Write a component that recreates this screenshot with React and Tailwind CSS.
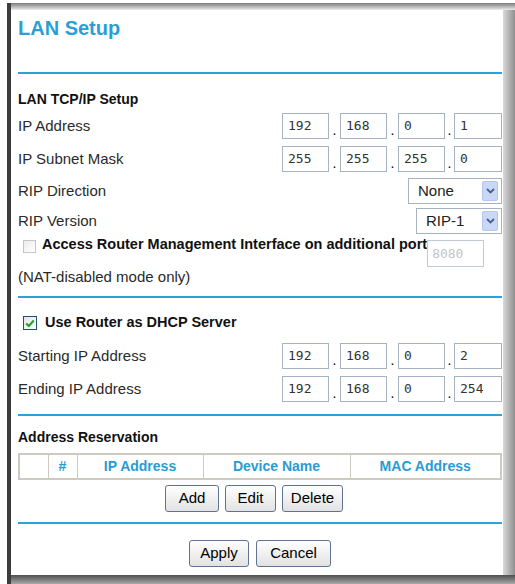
import React from 'react';

const Octet = ({ value }) => (
  <div className="w-[47px] h-[26px] border border-[#a7b2c0] bg-white pl-[5px] flex items-center font-['DejaVu_Sans_Mono',monospace] text-[13px] text-[#333]">
    {value}
  </div>
);

const Dot = () => (
  <div className="w-[11px] h-[26px] flex items-end justify-center pb-[2px] text-[14px] leading-none text-black">.</div>
);

const IpField = ({ parts }) => (
  <div className="flex">
    <Octet value={parts[0]} />
    <Dot />
    <Octet value={parts[1]} />
    <Dot />
    <Octet value={parts[2]} />
    <div className="w-[9px] h-[26px] flex items-end justify-center pb-[2px] text-[14px] leading-none text-black">.</div>
    <div className="w-[48px] h-[26px] border border-[#a7b2c0] bg-white pl-[5px] flex items-center font-['DejaVu_Sans_Mono',monospace] text-[13px] text-[#333]">
      {parts[3]}
    </div>
  </div>
);

const Select = ({ label, width }) => (
  <div className={`${width} h-[26px] border border-[#a7b2c0] bg-white flex items-center justify-between pl-[9px] pr-[3px]`}>
    <span className="text-[15px] text-[#222]">{label}</span>
    <div className="w-[16px] h-[20px] bg-[#c9d8f6] border border-[#b4c6ec] rounded-[2px] flex items-center justify-center">
      <svg width="9" height="6" viewBox="0 0 9 6">
        <path d="M1 1 L4.5 4.5 L8 1" fill="none" stroke="#4b5f8c" strokeWidth="1.8" />
      </svg>
    </div>
  </div>
);

const Rule = ({ className }) => <div className={`h-[2px] bg-[#2ba3d8] ${className}`} />;

const Button = ({ children, width }) => (
  <button className={`${width} h-[27px] border border-[#5f7390] rounded-[3px] bg-gradient-to-b from-white to-[#e2e2e2] text-[15px] text-black flex items-center justify-center`}>
    {children}
  </button>
);

const Row = ({ label, children, className }) => (
  <div className={`flex items-center justify-between h-[26px] ${className}`}>
    <span className="text-[15px] text-[#2a2a2a]">{label}</span>
    {children}
  </div>
);

export default function App() {
  return (
    <div className="w-[515px] h-[584px] bg-white pt-[3px] pl-[7px] flex font-['Liberation_Sans',Arial,sans-serif]">
      <div className="flex-1 flex">
        {/* left frame */}
        <div className="w-[4px] bg-[#3d3d3d]" />
        <div className="flex-1 flex flex-col">
          <div className="h-[7px] bg-gradient-to-b from-[#7d7d7d] to-[#ececec]" />
          <div className="flex-1 flex">
            {/* Panel */}
            <div className="flex-1 bg-white pl-[7px] pr-[1px] flex flex-col">
              <h1 className="mt-[6px] h-[24px] leading-[24px] text-[20px] font-bold text-[#2b9fd5]">LAN Setup</h1>
              <Rule className="mt-[32px]" />

              <div className="mt-[17px] h-[16px] leading-[16px] text-[14px] font-bold text-[#111]">LAN TCP/IP Setup</div>
              <Row label="IP Address" className="mt-[6px]">
                <IpField parts={['192', '168', '0', '1']} />
              </Row>
              <Row label="IP Subnet Mask" className="mt-[7px]">
                <IpField parts={['255', '255', '255', '0']} />
              </Row>
              <Row label="RIP Direction" className="mt-[6px]">
                <Select label="None" width="w-[94px]" />
              </Row>
              <Row label="RIP Version" className="mt-[4px]">
                <Select label="RIP-1" width="w-[86px]" />
              </Row>
              <div className="mt-[2px] flex items-start">
                <div className="mt-[4px] ml-[5px] w-[13px] h-[13px] border border-[#c6c6c6] bg-gradient-to-br from-[#ececec] to-white" />
                <span className="ml-[6px] h-[17px] leading-[17px] text-[14.5px] font-bold text-[#111]">
                  Access Router Management Interface on additional port
                </span>
                <div className="mt-[4px] w-[57px] h-[27px] border border-[#c3cad4] bg-white pl-[4px] flex items-center font-['DejaVu_Sans_Mono',monospace] text-[13px] text-[#c4c4c4]">
                  8080
                </div>
              </div>
              <div className="mt-[1px] h-[17px] leading-[17px] text-[15px] text-[#2a2a2a]">(NAT-disabled mode only)</div>
              <Rule className="mt-[11px]" />

              <div className="mt-[17px] h-[16px] flex items-center">
                <div className="ml-[5px] w-[14px] h-[14px] border border-[#1f4f7c] bg-gradient-to-br from-[#e4e4e4] to-white flex items-center justify-center">
                  <svg width="10" height="9" viewBox="0 0 10 9">
                    <path d="M1.2 4.5 L3.8 7 L8.8 1.5" fill="none" stroke="#20a020" strokeWidth="2" />
                  </svg>
                </div>
                <span className="ml-[8px] text-[14.5px] font-bold text-[#111]">Use Router as DHCP Server</span>
              </div>
              <Row label="Starting IP Address" className="mt-[12px]">
                <IpField parts={['192', '168', '0', '2']} />
              </Row>
              <Row label="Ending IP Address" className="mt-[7px]">
                <IpField parts={['192', '168', '0', '254']} />
              </Row>
              <Rule className="mt-[12px]" />

              <div className="mt-[13px] h-[16px] leading-[16px] text-[14px] font-bold text-[#111]">Address Reservation</div>
              <table className="mt-[8px] w-full border-collapse border-2 border-[#cfcac0] text-[14px] font-bold text-[#2a9bd2]">
                <thead>
                  <tr className="h-[25px]">
                    <th className="w-[29px] border border-[#cfcac0]" />
                    <th className="w-[29px] border border-[#cfcac0] font-bold">#</th>
                    <th className="w-[126px] border border-[#cfcac0] font-bold">IP Address</th>
                    <th className="w-[147px] border border-[#cfcac0] font-bold">Device Name</th>
                    <th className="border border-[#cfcac0] font-bold">MAC Address</th>
                  </tr>
                </thead>
              </table>
              <div className="mt-[5px] flex justify-center gap-[6px] pr-[12px]">
                <Button width="w-[54px]">Add</Button>
                <Button width="w-[51px]">Edit</Button>
                <Button width="w-[61px]">Delete</Button>
              </div>
              <Rule className="mt-[10px]" />
              <div className="mt-[16px] flex justify-center gap-[7px]">
                <Button width="w-[60px]">Apply</Button>
                <Button width="w-[75px]">Cancel</Button>
              </div>
            </div>
            {/* right frame */}
            <div className="w-[12px] bg-gradient-to-r from-[#dadada] to-[#8f8f8f]" />
          </div>
          <div className="h-[9px] bg-gradient-to-b from-[#4f4f4f] to-[#a9a9a9]" />
        </div>
      </div>
    </div>
  );
}
